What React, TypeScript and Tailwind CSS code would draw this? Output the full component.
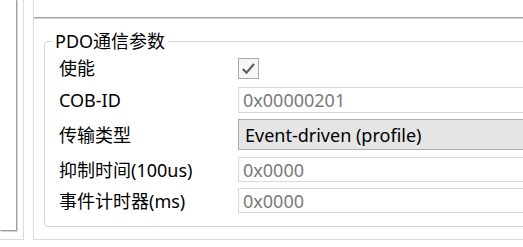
import React from "react";

const font = { fontFamily: '"Noto Sans", "Noto Sans CJK SC", sans-serif' };

function Label({ children }: { children: React.ReactNode }) {
  return <div className="w-[179px] shrink-0 text-[18px] leading-[22px] text-black">{children}</div>;
}

function TextBox({ value, h }: { value: string; h: string }) {
  return (
    <div className={`flex-1 ${h} flex items-center border border-[#d9d9d9] bg-white pl-[4px] text-[18px] leading-[22px] text-[#7a7a7a]`}>
      {value}
    </div>
  );
}

export default function App() {
  return (
    <div className="w-[523px] h-[247px] bg-white overflow-hidden flex" style={font}>
      <div className="w-[24px] h-[240px] shrink-0 border-r border-b border-[#dcdcdc]">
        <div className="w-[17px] h-[231px] border-r border-b border-[#a0a0a0] shadow-[1px_1px_0_#d4d4d4]" />
      </div>
      <div className="ml-[9px] w-[600px] shrink-0 h-[240px] border-l border-b border-[#dcdcdc] flex flex-col">
        <div className="h-[18px] shrink-0 border-b border-[#a0a0a0] shadow-[0_1px_0_#d4d4d4]" />
        <fieldset className="mt-[12px] ml-[10px] w-[560px] border border-[#d5d5d5] rounded-[4px] p-0 m-0">
          <legend className="ml-[7px] px-[3px] text-[18px] leading-[22px] text-black">PDO通信参数</legend>
          <div className="pl-[14px] pb-[13px] flex flex-col">
            <div className="mt-[6px] h-[20px] flex items-center">
              <Label>使能</Label>
              <div className="w-[21px] h-[21px] border border-[#a8a8a8] bg-[#f7f7f7] flex items-center justify-center">
                <svg width="17" height="17" viewBox="0 0 17 17">
                  <path d="M2.8 9 L6.5 12.6 L14 4" fill="none" stroke="#606060" strokeWidth="2.2" />
                </svg>
              </div>
            </div>
            <div className="mt-[9px] h-[26px] flex items-center">
              <Label>COB-ID</Label>
              <TextBox value="0x00000201" h="h-[26px]" />
            </div>
            <div className="mt-[6px] h-[31px] flex items-center">
              <Label>传输类型</Label>
              <div className="flex-1 h-[31px] flex items-center border border-[#adadad] bg-[#e5e5e5] pl-[6px] text-[18px] leading-[22px] text-black">
                Event-driven (profile)
              </div>
            </div>
            <div className="mt-[7px] h-[25px] flex items-center">
              <Label>抑制时间(100us)</Label>
              <TextBox value="0x0000" h="h-[25px]" />
            </div>
            <div className="mt-[6px] h-[25px] flex items-center">
              <Label>事件计时器(ms)</Label>
              <TextBox value="0x0000" h="h-[25px]" />
            </div>
          </div>
        </fieldset>
      </div>
    </div>
  );
}
